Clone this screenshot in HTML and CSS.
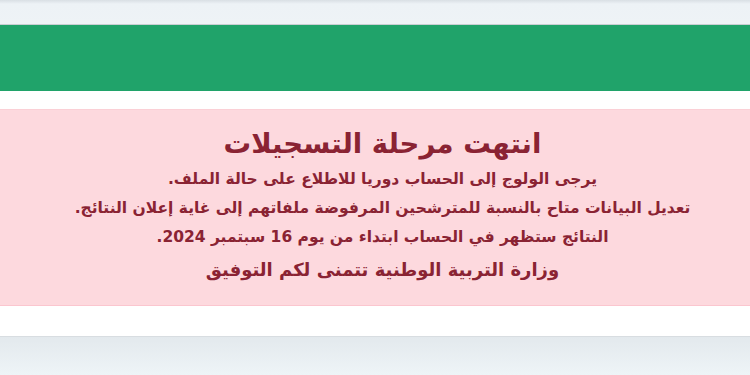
FILE: index.html
```html
<!DOCTYPE html>
<html lang="ar" dir="rtl">
<head>
<meta charset="utf-8">
<link rel="stylesheet" href="styles.css">
</head>
<body>
<div class="topbar"></div>
<div class="greenbar"></div>
<div class="spacer"></div>
<div class="alert">
  <h1 class="title">انتهت مرحلة التسجيلات</h1>
  <p class="line">يرجى الولوج إلى الحساب دوريا للاطلاع على حالة الملف.</p>
  <p class="line">تعديل البيانات متاح بالنسبة للمترشحين المرفوضة ملفاتهم إلى غاية إعلان النتائج.</p>
  <p class="line">النتائج ستظهر في الحساب ابتداء من يوم 16 سبتمبر 2024.</p>
  <p class="sign">وزارة التربية الوطنية تتمنى لكم التوفيق</p>
</div>
<div class="spacer2"></div>
<div class="footer"></div>
</body>
</html>
```
FILE: styles.css
```css
html, body {
  margin: 0;
  padding: 0;
  background: #ffffff;
  font-family: "DejaVu Sans", "Noto Sans", sans-serif;
}
.topbar {
  height: 24px;
  background: linear-gradient(#d9dfe4 0, #edf2f6 4px, #eef3f6 100%);
  border-bottom: 1px solid #c9ced2;
}
.greenbar {
  height: 66px;
  background: #20a36a;
}
.spacer {
  height: 18px;
}
.alert {
  box-sizing: border-box;
  height: 197px;
  background: #fdd9de;
  border-top: 1px solid #fbd0d6;
  border-bottom: 1px solid #fbc6cf;
  color: #8a2333;
  text-align: center;
  padding: 15px 0 0 15px;
}
.title {
  margin: 0 0 4px;
  font-size: 27.5px;
  font-weight: bold;
  line-height: 36px;
}
.line {
  margin: 0;
  font-size: 15.5px;
  font-weight: bold;
  line-height: 29px;
}
.sign {
  margin: 2px 0 0;
  font-size: 18px;
  font-weight: bold;
  line-height: 32px;
}
.spacer2 {
  height: 30px;
}
.footer {
  height: 38px;
  border-top: 1px solid #d8dde1;
  background: linear-gradient(#e3e9ed, #eef4f7);
}
```
